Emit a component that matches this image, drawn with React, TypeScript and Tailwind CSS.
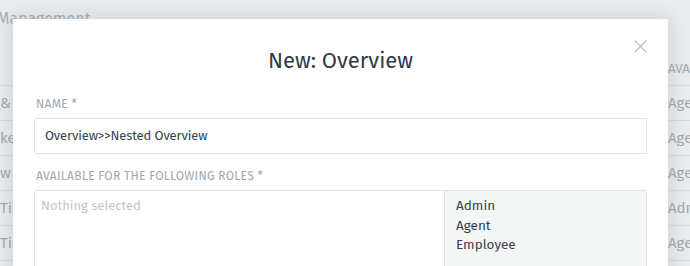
import React from "react";

const rowsLeft = ["&", "ke", "w", "Tickets", "Tickets", "Tickets"];
const rowsRight = ["Agent", "Agent", "Agent", "Admin", "Agent"];

export default function App() {
  const font = { fontFamily: '"Fira Sans", Roboto, "Noto Sans", sans-serif' };
  return (
    <div className="relative w-[690px] h-[266px] overflow-hidden bg-[#e9ebed]" style={font}>
      {/* background page */}
      <div className="flex flex-col w-full h-full">
        <div className="h-[51px] shrink-0 pt-[9px] text-[16px] leading-[20px] text-[#a9afb5] -ml-[3px]">Management</div>
        <div className="flex flex-row w-full shrink-0">
          <div className="flex flex-col w-[120px]">
            <div className="h-[35px] border-b border-[#d8dbde] text-[13px] leading-[35px] text-[#a9afb5] pl-[40px] uppercase">Name</div>
            {rowsLeft.map((r, i) => (
              <div key={i} className="h-[35px] border-b border-[#d8dbde] text-[15px] leading-[35px] text-[#a3a9b0] whitespace-nowrap">{r}</div>
            ))}
          </div>
          <div className="flex-1" />
          <div className="flex flex-col w-[60px] -mr-[38px]">
            <div className="h-[35px] border-b border-[#d8dbde] text-[13px] leading-[35px] text-[#a3a9b0] uppercase whitespace-nowrap">Available</div>
            {rowsRight.map((r, i) => (
              <div key={i} className="h-[35px] border-b border-[#d8dbde] text-[15px] leading-[35px] text-[#a3a9b0] whitespace-nowrap">{r}</div>
            ))}
          </div>
        </div>
      </div>

      {/* modal */}
      <div className="absolute left-[13px] top-[19px] w-[655px] h-[270px] bg-white shadow-[0_0_18px_rgba(60,70,80,0.18)] flex flex-col px-[21px]">
        <div className="relative pt-[28px] h-[56px] flex justify-center">
          <div className="text-[22px] leading-[28px] text-[#333c45]">New: Overview</div>
          <svg className="absolute right-[0px] top-[21px]" width="13" height="13" viewBox="0 0 13 13" fill="none" stroke="#bcc1c6" strokeWidth="1.3">
            <path d="M0.5 0.5 L12.5 12.5 M12.5 0.5 L0.5 12.5" />
          </svg>
        </div>
        <div className="mt-[21px] h-[16px] leading-[16px] text-[12px] tracking-[0.025em] text-[#9ea8b2] pl-[2px] uppercase">Name *</div>
        <div className="mt-[6px] h-[36px] shrink-0 border border-[#e1e3e5] rounded-[2px] flex items-center pl-[10px] text-[13px] tracking-[-0.01em] text-[#37424c]">
          Overview&gt;&gt;Nested Overview
        </div>
        <div className="mt-[14px] h-[16px] leading-[16px] text-[12px] tracking-[0.025em] text-[#9ea8b2] pl-[2px] uppercase">Available for the following roles *</div>
        <div className="mt-[6px] h-[90px] shrink-0 border border-[#e1e3e5] rounded-[2px] flex flex-row">
          <div className="flex-1 pl-[6px] pt-[5px] text-[13px] leading-[20px] text-[#c2c6ca]">Nothing selected</div>
          <div className="w-[202px] bg-[#f4f5f5] border-l border-[#e1e3e5] pl-[11px] pt-[5px] flex flex-col text-[13.5px] leading-[19.5px] text-[#38424c]">
            <div>Admin</div>
            <div>Agent</div>
            <div>Employee</div>
          </div>
        </div>
      </div>
    </div>
  );
}
